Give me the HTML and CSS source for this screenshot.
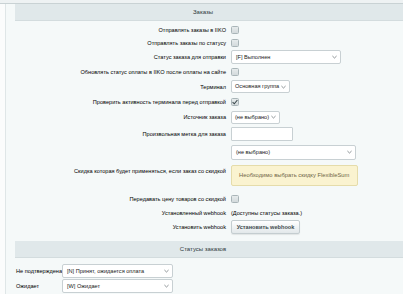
FILE: index.html
```html
<!DOCTYPE html>
<html lang="ru">
<head>
    <meta charset="UTF-8">
    <title>Настройки IIKO</title>
    <link rel="stylesheet" href="styles.css">
</head>
<body>
    <div class="topbar"></div>
    <div class="frame">
        <div class="panel">
            <div class="heading">Заказы</div>
            <div class="form">
                <div class="row r13">
                    <div class="label">Отправлять заказы в IIKO</div>
                    <div class="field"><span class="check"></span></div>
                </div>
                <div class="row r13">
                    <div class="label">Отправлять заказы по статусу</div>
                    <div class="field"><span class="check"></span></div>
                </div>
                <div class="row r16">
                    <div class="label">Статус заказа для отправки</div>
                    <div class="field">
                        <div class="select sel-status">[F] Выполнен
                            <svg class="arrow" viewBox="0 0 6 4"><path d="M0.5 0.8 L3 3.2 L5.5 0.8" /></svg>
                        </div>
                    </div>
                </div>
                <div class="row r14">
                    <div class="label">Обновлять статус оплаты в IIKO после оплаты на сайте</div>
                    <div class="field"><span class="check"></span></div>
                </div>
                <div class="row r15">
                    <div class="label">Терминал</div>
                    <div class="field">
                        <div class="select sel-small">Основная группа
                            <svg class="arrow" viewBox="0 0 6 4"><path d="M0.5 0.8 L3 3.2 L5.5 0.8" /></svg>
                        </div>
                    </div>
                </div>
                <div class="row r15">
                    <div class="label">Проверить активность терминала перед отправкой</div>
                    <div class="field">
                        <span class="check checked">
                            <svg viewBox="0 0 8 8"><path d="M1.6 4.2 L3.3 5.8 L6.4 2" /></svg>
                        </span>
                    </div>
                </div>
                <div class="row r16">
                    <div class="label">Источник заказа</div>
                    <div class="field">
                        <div class="select sel-small">(не выбрано)
                            <svg class="arrow" viewBox="0 0 6 4"><path d="M0.5 0.8 L3 3.2 L5.5 0.8" /></svg>
                        </div>
                    </div>
                </div>
                <div class="row r18">
                    <div class="label">Произвольная метка для заказа</div>
                    <div class="field"><div class="input"></div></div>
                </div>
                <div class="row r19">
                    <div class="label"></div>
                    <div class="field">
                        <div class="select sel-wide">(не выбрано)
                            <svg class="arrow" viewBox="0 0 6 4"><path d="M0.5 0.8 L3 3.2 L5.5 0.8" /></svg>
                        </div>
                    </div>
                </div>
                <div class="row row-top">
                    <div class="label">Скидка которая будет применяться, если заказ со скидкой</div>
                    <div class="field">
                        <div class="notice">Необходимо выбрать скидку FlexibleSum</div>
                    </div>
                </div>
                <div class="row r14">
                    <div class="label">Передавать цену товаров со скидкой</div>
                    <div class="field"><span class="check"></span></div>
                </div>
                <div class="row r13">
                    <div class="label">Установленный webhook</div>
                    <div class="field">(Доступны статусы заказа.)</div>
                </div>
                <div class="row r16">
                    <div class="label">Установить webhook</div>
                    <div class="field"><div class="btn">Установить webhook</div></div>
                </div>
            </div>
            <div class="heading">Статусы заказов</div>
            <div class="statuses">
                <div class="status-row">
                    <div class="status-label">Не подтверждена</div>
                    <div class="select sel-state">[N] Принят, ожидается оплата
                        <svg class="arrow" viewBox="0 0 6 4"><path d="M0.5 0.8 L3 3.2 L5.5 0.8" /></svg>
                    </div>
                </div>
                <div class="status-row">
                    <div class="status-label">Ожидает</div>
                    <div class="select sel-state">[W] Ожидает
                        <svg class="arrow" viewBox="0 0 6 4"><path d="M0.5 0.8 L3 3.2 L5.5 0.8" /></svg>
                    </div>
                </div>
            </div>
        </div>
    </div>
</body>
</html>
```

FILE: styles.css
```css
:root {
    --bg: #f5f9f9;
    --heading: #e0e8ea;
    --border: #c8d0d3;
    --text: #000000;
}
html, body {
    margin: 0;
    height: 100%;
    overflow: hidden;
}
body {
    font-family: "Liberation Sans", Arial, sans-serif;
    font-size: 5.6px;
    color: var(--text);
    background: #fbfcfc;
}
.topbar {
    height: 3px;
    background: #eef2f3;
    border-bottom: 1px solid #c9d2d4;
}
.frame {
    margin-left: 5px;
    border-left: 1px solid #dfe6e7;
    background: var(--bg);
    height: 100%;
}
.panel {
    padding-left: 9px;
}
.heading {
    height: 16px;
    line-height: 16px;
    background: var(--heading);
    border-bottom: 1px solid #d3dcde;
    text-align: center;
    color: #2f3a3d;
    font-size: 6px;
    padding-right: 12px;
}
.form {
    padding: 2px 0 6px;
}
.row {
    display: flex;
    align-items: center;
}
.r13 { height: 13px; }
.r14 { height: 14px; }
.r15 { height: 15px; }
.r16 { height: 16px; }
.r18 { height: 18px; }
.r19 { height: 19px; }
.row-top {
    align-items: flex-start;
    padding: 3px 0 6px;
}
.row-top .label {
    padding-top: 3px;
}
.label {
    width: 211px;
    flex-shrink: 0;
    text-align: right;
    padding-right: 5px;
}
.field {
    display: flex;
    align-items: center;
}
.check {
    width: 6px;
    height: 6px;
    border: 1px solid #a9b5b8;
    border-radius: 1.5px;
    background: linear-gradient(#e6ebec, #d3dadc);
    display: flex;
}
.check svg {
    width: 8px;
    height: 8px;
    margin: -1px;
}
.check svg path {
    fill: none;
    stroke: #3c4a4e;
    stroke-width: 1.1;
}
.select {
    position: relative;
    box-sizing: border-box;
    height: 14px;
    line-height: 12px;
    padding-left: 4px;
    background: #ffffff;
    border: 1px solid var(--border);
    border-radius: 2px;
    color: #1a1a1a;
    white-space: nowrap;
}
.arrow {
    position: absolute;
    right: 3px;
    top: 4px;
    width: 5px;
    height: 4px;
}
.arrow path {
    fill: none;
    stroke: #555f62;
    stroke-width: 0.8;
}
.sel-status { width: 110px; }
.sel-small {
    height: 13px;
    line-height: 11px;
    padding: 0 10px 0 3px;
}
.sel-small .arrow { top: 3.5px; }
.sel-wide { width: 125px; height: 15px; line-height: 13px; }
.sel-state { width: 111px; }
.input {
    width: 62px;
    height: 14px;
    box-sizing: border-box;
    background: #ffffff;
    border: 1px solid var(--border);
    border-radius: 1px;
}
.notice {
    width: 127px;
    height: 21px;
    box-sizing: border-box;
    background: #faf3d0;
    border: 1px solid #e5dcaa;
    border-radius: 2px;
    color: #6f6646;
    font-size: 5.8px;
    line-height: 19px;
    padding-left: 7px;
    white-space: nowrap;
}
.btn {
    box-sizing: border-box;
    width: 69px;
    height: 14px;
    line-height: 12px;
    text-align: center;
    border: 1px solid #c4cdd0;
    border-radius: 2px;
    background: linear-gradient(#ffffff, #e2e8ea);
    color: #3f4b4e;
    font-weight: bold;
    box-shadow: 0 1px 1px rgba(0, 0, 0, 0.08);
}
.statuses {
    padding-top: 5px;
}
.status-row {
    display: flex;
    align-items: center;
    height: 15px;
}
.status-label {
    width: 46px;
    flex-shrink: 0;
    padding-left: 1px;
    white-space: nowrap;
}
```
